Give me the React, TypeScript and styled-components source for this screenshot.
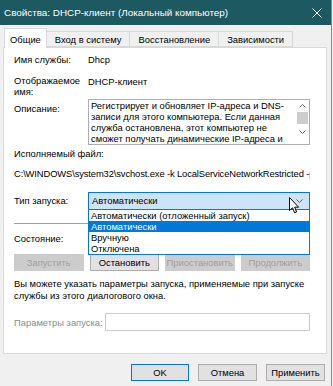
import styled, { createGlobalStyle } from "styled-components";

const GlobalStyle = createGlobalStyle`
  html, body {
    margin: 0;
    padding: 0;
    background: #f0f0f0;
  }
  body {
    font-family: "Liberation Sans", Arial, sans-serif;
    font-size: 9.4px;
    color: #000;
  }
`;

const Window = styled.div`
  width: 332px;
  height: 386px;
  box-sizing: border-box;
  border-right: 1px solid #8a8a8a;
  background: #f0f0f0;
  overflow: hidden;
  display: flex;
  flex-direction: column;
`;

const TitleBar = styled.div`
  height: 25px;
  flex-shrink: 0;
  background: #1d5960;
  color: #fff;
  font-size: 9.9px;
  display: flex;
  align-items: center;
  justify-content: space-between;
  padding: 0 9px 0 4px;
`;

const Tabs = styled.div`
  height: 22px;
  display: flex;
  align-items: flex-end;
  padding-left: 4px;
  position: relative;
  z-index: 1;
`;

const Tab = styled.div<{ $active?: boolean }>`
  box-sizing: border-box;
  height: ${(p) => (p.$active ? 20 : 16)}px;
  margin-bottom: ${(p) => (p.$active ? -1 : 0)}px;
  margin-left: ${(p) => (p.$active ? 0 : -1)}px;
  padding: ${(p) => (p.$active ? "2px 5px 0" : "0 8px")};
  border: 1px solid #d9d9d9;
  border-bottom: ${(p) => (p.$active ? "none" : "1px solid #d9d9d9")};
  background: ${(p) => (p.$active ? "#fff" : "#f0f0f0")};
  display: flex;
  align-items: center;
  white-space: nowrap;
  z-index: ${(p) => (p.$active ? 2 : 1)};
`;

const Panel = styled.div`
  box-sizing: border-box;
  margin-left: 3px;
  width: 324px;
  height: 307px;
  flex-shrink: 0;
  background: #fff;
  border: 1px solid #d9d9d9;
  padding: 0 16px 0 10px;
  display: flex;
  flex-direction: column;
`;

const FieldRow = styled.div<{ $top: number; $center?: boolean }>`
  display: grid;
  grid-template-columns: 74px 1fr;
  align-items: ${(p) => (p.$center ? "center" : "start")};
  margin-top: ${(p) => p.$top}px;
  line-height: 14px;
`;

const Label = styled.div<{ $pad?: number }>`
  line-height: ${(p) => (p.$pad !== undefined ? "11px" : "14px")};
  padding-top: ${(p) => p.$pad ?? 0}px;
`;

const Value = styled.div<{ $pad?: number }>`
  padding-top: ${(p) => p.$pad ?? 0}px;
`;

const DescBox = styled.div`
  box-sizing: border-box;
  width: 222px;
  height: 46px;
  border: 1px solid #abadb3;
  display: flex;
  overflow: hidden;
`;

const DescText = styled.div`
  flex: 1;
  padding-left: 2px;
  line-height: 11px;
  white-space: nowrap;
  overflow: hidden;
`;

const Scrollbar = styled.div`
  width: 13px;
  display: flex;
  flex-direction: column;
  align-items: center;
  padding-top: 4px;
`;

const Thumb = styled.div`
  width: 11px;
  height: 13px;
  margin-top: 4px;
  background: #cdcdcd;
`;

const Line = styled.div<{ $top: number; $tight?: boolean }>`
  margin-top: ${(p) => p.$top}px;
  line-height: 14px;
  white-space: nowrap;
  overflow: hidden;
  letter-spacing: ${(p) => (p.$tight ? "-0.12px" : "normal")};
`;

const Select = styled.div`
  position: relative;
  box-sizing: border-box;
  width: 222px;
  height: 18px;
  border: 1px solid #0078d7;
  background: #cce4f7;
  padding: 0 6px 0 3px;
  display: flex;
  align-items: center;
  justify-content: space-between;
`;

const DropList = styled.div`
  position: absolute;
  left: -1px;
  top: 16px;
  width: 222px;
  box-sizing: border-box;
  border: 1px solid #0078d7;
  background: #fff;
  z-index: 5;
`;

const Option = styled.div<{ $selected?: boolean }>`
  height: 11px;
  line-height: 11px;
  padding-left: 2px;
  background: ${(p) => (p.$selected ? "#0078d7" : "#fff")};
  color: ${(p) => (p.$selected ? "#fff" : "#000")};
  white-space: nowrap;
`;

const Cursor = styled.svg`
  position: absolute;
  left: 200px;
  top: 4px;
  z-index: 6;
`;

const Separator = styled.div`
  margin-top: 13px;
  height: 1px;
  background: #a0a0a0;
`;

const ButtonRow = styled.div`
  margin-top: 8px;
  display: grid;
  grid-template-columns: repeat(4, 1fr);
  gap: 6px;
`;

const Button = styled.div<{ $disabled?: boolean; $default?: boolean; $w?: number }>`
  box-sizing: border-box;
  height: 17px;
  width: ${(p) => (p.$w ? `${p.$w}px` : "auto")};
  display: flex;
  align-items: center;
  justify-content: center;
  white-space: nowrap;
  background: ${(p) => (p.$disabled ? "#cccccc" : "#e1e1e1")};
  border: 1px solid
    ${(p) => (p.$default ? "#0078d7" : p.$disabled ? "#cccccc" : "#adadad")};
  color: ${(p) => (p.$disabled ? "#a0a0a0" : "#000")};
`;

const Hint = styled.div`
  margin-top: 7px;
  line-height: 12px;
`;

const ParamRow = styled.div`
  margin-top: 11px;
  display: flex;
  align-items: center;
  justify-content: space-between;
  color: #8c8c8c;
`;

const ParamInput = styled.div`
  box-sizing: border-box;
  width: 205px;
  height: 18px;
  border: 1px solid #cccccc;
  background: #fff;
`;

const Footer = styled.div`
  margin-top: 10px;
  display: flex;
  justify-content: flex-end;
  gap: 9px;
  padding-right: 6px;
`;

const Chevron = ({ up }: { up?: boolean }) => (
  <svg width="7" height="4" viewBox="0 0 7 4">
    <path
      d={up ? "M0.5 3.5 L3.5 0.5 L6.5 3.5" : "M0.5 0.5 L3.5 3.5 L6.5 0.5"}
      fill="none"
      stroke="#606060"
      strokeWidth="1"
    />
  </svg>
);

export default function App() {
  return (
    <>
      <GlobalStyle />
      <Window>
        <TitleBar>
          <span>Свойства: DHCP-клиент (Локальный компьютер)</span>
          <svg width="10" height="10" viewBox="0 0 10 10">
            <path d="M0.5 0.5 L9.5 9.5 M9.5 0.5 L0.5 9.5" stroke="#fff" strokeWidth="1" />
          </svg>
        </TitleBar>

        <Tabs>
          <Tab $active>Общие</Tab>
          <Tab>Вход в систему</Tab>
          <Tab>Восстановление</Tab>
          <Tab>Зависимости</Tab>
        </Tabs>

        <Panel>
          <FieldRow $top={5}>
            <Label>Имя службы:</Label>
            <Value>Dhcp</Value>
          </FieldRow>

          <FieldRow $top={7}>
            <Label $pad={1}>
              Отображаемое
              <br />
              имя:
            </Label>
            <Value $pad={1}>DHCP-клиент</Value>
          </FieldRow>

          <FieldRow $top={2}>
            <Label $pad={4}>Описание:</Label>
            <DescBox>
              <DescText>
                <div>Регистрирует и обновляет IP-адреса и DNS-</div>
                <div>записи для этого компьютера. Если данная</div>
                <div>служба остановлена, этот компьютер не</div>
                <div>сможет получать динамические IP-адреса и</div>
              </DescText>
              <Scrollbar>
                <Chevron up />
                <Thumb />
                <div style={{ flex: 1 }} />
                <div style={{ paddingBottom: 6 }}>
                  <Chevron />
                </div>
              </Scrollbar>
            </DescBox>
          </FieldRow>

          <Line $top={2}>Исполняемый файл:</Line>
          <Line $top={6} $tight>
            C:\WINDOWS\system32\svchost.exe -k LocalServiceNetworkRestricted -p
          </Line>

          <FieldRow $top={11} $center>
            <Label>Тип запуска:</Label>
            <Select>
              <span>Автоматически</span>
              <Chevron />
              <Cursor width="11" height="17" viewBox="0 0 11 17">
                <path
                  d="M0.5 0.5 L0.5 13.5 L3.5 10.8 L5.6 15.8 L7.6 15 L5.6 10.2 L9.6 10.2 Z"
                  fill="#fff"
                  stroke="#000"
                  strokeWidth="1"
                  strokeLinejoin="round"
                />
              </Cursor>
              <DropList>
                <Option>Автоматически (отложенный запуск)</Option>
                <Option $selected>Автоматически</Option>
                <Option>Вручную</Option>
                <Option>Отключена</Option>
              </DropList>
            </Select>
          </FieldRow>

          <Separator />

          <Line $top={8}>Состояние:</Line>

          <ButtonRow>
            <Button $disabled>Запустить</Button>
            <Button>Остановить</Button>
            <Button $disabled>Приостановить</Button>
            <Button $disabled>Продолжить</Button>
          </ButtonRow>

          <Hint>
            Вы можете указать параметры запуска, применяемые при запуске
            <br />
            службы из этого диалогового окна.
          </Hint>

          <ParamRow>
            <span>Параметры запуска:</span>
            <ParamInput />
          </ParamRow>
        </Panel>

        <Footer>
          <Button $default $w={58}>
            OK
          </Button>
          <Button $w={59}>Отмена</Button>
          <Button $w={59}>Применить</Button>
        </Footer>
      </Window>
    </>
  );
}
